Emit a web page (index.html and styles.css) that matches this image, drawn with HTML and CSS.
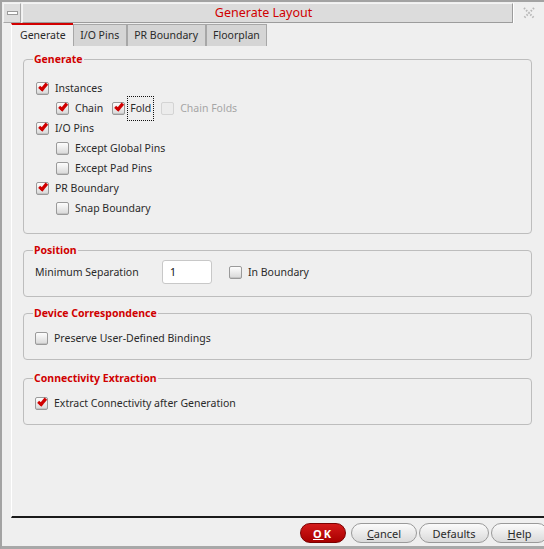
FILE: index.html
```html
<!DOCTYPE html>
<html>
<head>
<meta charset="utf-8">
<link rel="stylesheet" href="styles.css">
</head>
<body>
<div class="window">
  <div class="titlebar">
    <div class="tb-btn"><span class="tb-min"></span></div>
    <div class="tb-title">Generate Layout</div>
    <div class="tb-close">
      <svg width="14" height="14" viewBox="0 0 14 14"><path d="M2 2 L12 12 M12 2 L2 12" stroke="#b8b8b8" stroke-width="2" stroke-dasharray="1.5 1.5" fill="none"/></svg>
    </div>
  </div>
  <div class="tabs">
    <div class="tab active">Generate</div>
    <div class="tab">I/O Pins</div>
    <div class="tab">PR Boundary</div>
    <div class="tab">Floorplan</div>
  </div>
  <div class="panel">
    <fieldset class="group g-generate">
      <legend>Generate</legend>
      <div class="rows">
        <div class="row"><span class="cb on"></span><span class="lbl">Instances</span></div>
        <div class="row ind">
          <span class="cb on"></span><span class="lbl">Chain</span>
          <span class="cb on sp"></span><span class="lbl focus">Fold</span>
          <span class="cb dis sp2"></span><span class="lbl dim">Chain Folds</span>
        </div>
        <div class="row"><span class="cb on"></span><span class="lbl">I/O Pins</span></div>
        <div class="row ind"><span class="cb"></span><span class="lbl">Except Global Pins</span></div>
        <div class="row ind"><span class="cb"></span><span class="lbl">Except Pad Pins</span></div>
        <div class="row"><span class="cb on"></span><span class="lbl">PR Boundary</span></div>
        <div class="row ind"><span class="cb"></span><span class="lbl">Snap Boundary</span></div>
      </div>
    </fieldset>
    <fieldset class="group small">
      <legend>Position</legend>
      <div class="prow">
        <span class="plabel">Minimum Separation</span>
        <span class="input">1</span>
        <span class="cb"></span><span class="lbl">In Boundary</span>
      </div>
    </fieldset>
    <fieldset class="group small">
      <legend>Device Correspondence</legend>
      <div class="row single"><span class="cb"></span><span class="lbl">Preserve User-Defined Bindings</span></div>
    </fieldset>
    <fieldset class="group small last">
      <legend>Connectivity Extraction</legend>
      <div class="row single"><span class="cb on"></span><span class="lbl">Extract Connectivity after Generation</span></div>
    </fieldset>
  </div>
  <div class="footer">
    <button class="btn ok"><u>O</u>K</button>
    <button class="btn cancel"><u>C</u>ancel</button>
    <button class="btn defaults">Defaults</button>
    <button class="btn help"><u>H</u>elp</button>
  </div>
</div>
</body>
</html>
```
FILE: styles.css
```css
html, body {
  margin: 0;
  padding: 0;
  background: #efefef;
}
body {
  font-family: "Noto Sans", "DejaVu Sans", sans-serif;
  font-size: 10.5px;
  color: #2a2a2a;
}
.window {
  width: 544px;
  height: 549px;
  box-sizing: border-box;
  border-left: 2px solid #a3a3a3;
  border-top: 2px solid #a3a3a3;
  border-bottom: 3px solid #a8a8a8;
  display: flex;
  flex-direction: column;
  background: #efefef;
  overflow: hidden;
}
.titlebar {
  height: 21px;
  display: flex;
  align-items: stretch;
  padding-top: 1px;
  box-sizing: border-box;
  flex: none;
}
.tb-btn {
  width: 16px;
  margin-left: 1px;
  background: #dedede;
  border: 1px solid #a8a8a8;
  border-top-color: #f4f4f4;
  border-left-color: #f4f4f4;
  display: flex;
  align-items: center;
  justify-content: center;
}
.tb-min {
  width: 9px;
  height: 2px;
  background: #ffffff;
  border: 1px solid #9a9a9a;
}
.tb-title {
  flex: 1;
  margin-left: 1px;
  background: #dcdcdc;
  border: 1px solid #9c9c9c;
  border-top-color: #f4f4f4;
  border-left-color: #f4f4f4;
  color: #d00000;
  font-family: "Noto Sans", "DejaVu Sans", sans-serif;
  font-size: 12.5px;
  text-align: center;
  line-height: 18px;
  padding-right: 8px;
}
.tb-close {
  width: 30px;
  display: flex;
  align-items: center;
  justify-content: center;
  border-left: 1px solid #ffffff;
}
.tabs {
  display: flex;
  margin-left: 9px;
  height: 22px;
  flex: none;
}
.tab {
  box-sizing: border-box;
  height: 22px;
  padding: 0 6.5px;
  line-height: 20px;
  margin-top: 1px;
  background: #d5d5d5;
  border: 1px solid #a7a7a7;
  border-bottom: none;
  margin-right: 0;
  color: #2a2a2a;
}
.tab.active {
  margin-top: 0;
  height: 22px;
  background: #efefef;
  border: none;
  border-top: 2px solid #d20000;
  border-left: 1px solid #ffffff;
  padding: 0 7px 0 8px;
  line-height: 20px;
}
.panel {
  flex: 1;
  margin-left: 9px;
  border-left: 1px solid #ffffff;
  border-bottom: 2px solid #1a1a1a;
  padding: 7px 12px 0 11px;
  display: flex;
  flex-direction: column;
  gap: 9px;
}
.group {
  margin: 0;
  border: 1px solid #bdbdbd;
  border-radius: 4px;
  padding: 0 10px 0 12px;
  min-width: 0;
}
.group legend {
  color: #d00000;
  font-weight: bold;
  padding: 0 1px;
  margin-left: -3px;
  line-height: 14px;
}
.g-generate {
  height: 182px;
  box-sizing: border-box;
}
.rows {
  padding-top: 12px;
}
.row {
  height: 20px;
  display: flex;
  align-items: center;
}
.row.ind {
  padding-left: 20px;
}
.row.single {
  margin-top: 8px;
  margin-left: -1px;
}
.cb {
  width: 11px;
  height: 11px;
  border: 1px solid #9a9a9a;
  border-radius: 2px;
  background: linear-gradient(#fdfdfd, #d8d8d8);
  flex: none;
  position: relative;
  box-shadow: inset 0 -1px 0 #c4c4c4;
}
.cb.on::after {
  content: "";
  position: absolute;
  border-right: 3px solid #d00000;
  border-bottom: 3px solid #d00000;
  transform: rotate(40deg) scaleX(1.1);
  transform-origin: 60% 60%;
  box-sizing: content-box;
  width: 2px;
  height: 6px;
  left: 3px;
  top: -1px;
}
.cb.dis {
  border-color: #d4d4d4;
  background: #ececec;
  box-shadow: none;
}
.lbl {
  margin-left: 6px;
  white-space: nowrap;
}
.cb.sp {
  margin-left: 9px;
}
.cb.sp2 {
  margin-left: 8px;
}
.lbl.focus {
  margin-left: 3px;
  outline: 1px dotted #111;
  padding: 4px 2px 5px 2px;
}
.lbl.dim {
  color: #a6a6a6;
}
.small {
  height: 54px;
  box-sizing: border-box;
}
.small.last {
  margin-top: 2px;
}
.prow {
  display: flex;
  align-items: center;
  margin-top: 3px;
}
.plabel {
  width: 127px;
  flex: none;
  margin-left: -1px;
}
.input {
  box-sizing: border-box;
  width: 50px;
  height: 24px;
  background: #ffffff;
  border: 1px solid #c8c8c8;
  border-radius: 3px;
  padding-left: 7px;
  line-height: 22px;
  margin-right: 17px;
  color: #111;
}
.footer {
  height: 28px;
  flex: none;
  display: flex;
  justify-content: flex-end;
  align-items: center;
  gap: 2px;
  padding-top: 2px;
  box-sizing: border-box;
}
.btn {
  font-family: "Noto Sans", "DejaVu Sans", sans-serif;
  font-size: 11px;
  height: 20px;
  border-radius: 10px;
  border: 1px solid #9a9a9a;
  background: linear-gradient(#fbfbfb, #dadada);
  color: #2a2a2a;
  padding: 0;
  margin: 0;
}
.btn u {
  text-decoration: underline;
}
.ok {
  width: 46px;
  background: linear-gradient(#d41a1a, #a80000);
  border-color: #7a0000;
  color: #ffffff;
  font-weight: bold;
  letter-spacing: 2px;
  margin-right: 3px;
}
.cancel { width: 66px; }
.defaults { width: 70px; }
.help {
  width: 57px;
  margin-right: -4px;
}
```
